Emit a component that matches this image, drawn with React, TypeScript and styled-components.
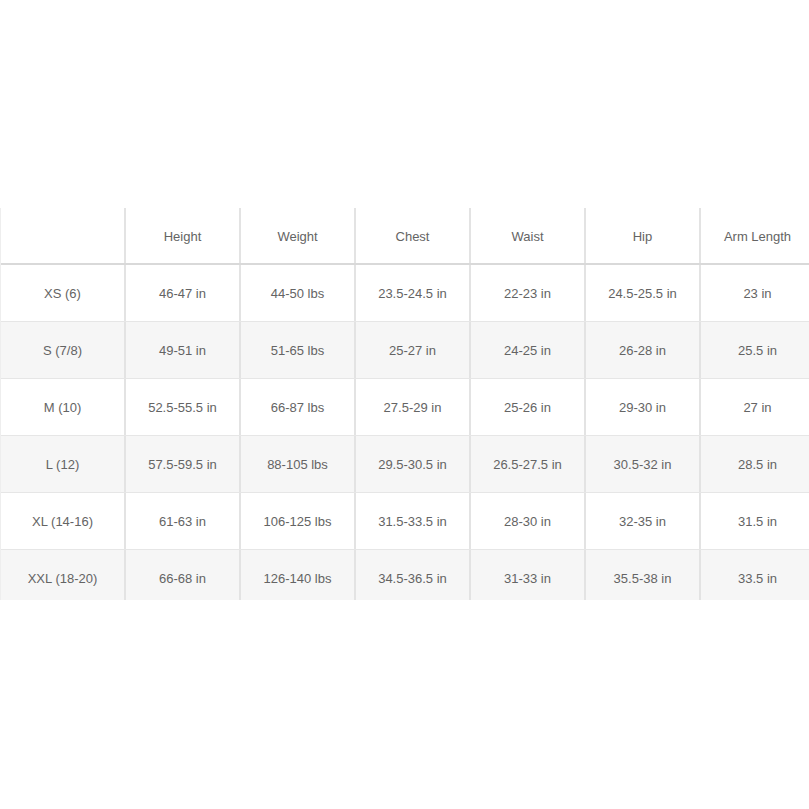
import React from "react";
import styled, { createGlobalStyle } from "styled-components";

const Global = createGlobalStyle`
  html, body { margin: 0; padding: 0; background: #ffffff; }
  body { font-family: "Liberation Sans", Arial, sans-serif; }
`;

const Page = styled.div`
  width: 809px;
  height: 809px;
  padding-top: 208px;
  box-sizing: border-box;
  overflow: hidden;
`;

const Clip = styled.div`
  height: 392px;
  overflow: hidden;
  width: 809px;
`;

const Table = styled.div`
  width: 817px;
  border-left: 1px solid #eeeeee;
  box-sizing: border-box;
`;

const Row = styled.div<{ $header?: boolean; $shaded?: boolean }>`
  display: grid;
  grid-template-columns: 125px repeat(6, 115px);
  height: 57px;
  box-sizing: border-box;
  background: ${(p) => (p.$shaded ? "#f6f6f6" : "#ffffff")};
  border-bottom: ${(p) => (p.$header ? "2px solid #d9d9d9" : "1px solid #e6e6e6")};
`;

const Cell = styled.div<{ $header?: boolean }>`
  display: flex;
  align-items: center;
  justify-content: center;
  padding-top: ${(p) => (p.$header ? "2px" : "0")};
  font-size: 13px;
  color: #646464;
  border-right: 2px solid #e3e3e3;
  box-sizing: border-box;
  white-space: nowrap;
`;

const headers = ["", "Height", "Weight", "Chest", "Waist", "Hip", "Arm Length"];

const rows: string[][] = [
  ["XS (6)", "46-47 in", "44-50 lbs", "23.5-24.5 in", "22-23 in", "24.5-25.5 in", "23 in"],
  ["S (7/8)", "49-51 in", "51-65 lbs", "25-27 in", "24-25 in", "26-28 in", "25.5 in"],
  ["M (10)", "52.5-55.5 in", "66-87 lbs", "27.5-29 in", "25-26 in", "29-30 in", "27 in"],
  ["L (12)", "57.5-59.5 in", "88-105 lbs", "29.5-30.5 in", "26.5-27.5 in", "30.5-32 in", "28.5 in"],
  ["XL (14-16)", "61-63 in", "106-125 lbs", "31.5-33.5 in", "28-30 in", "32-35 in", "31.5 in"],
  ["XXL (18-20)", "66-68 in", "126-140 lbs", "34.5-36.5 in", "31-33 in", "35.5-38 in", "33.5 in"],
];

export default function App() {
  return (
    <>
      <Global />
      <Page>
        <Clip>
          <Table>
            <Row $header>
              {headers.map((h, i) => (
                <Cell key={i} $header>
                  {h}
                </Cell>
              ))}
            </Row>
            {rows.map((r, i) => (
              <Row key={i} $shaded={i % 2 === 1}>
                {r.map((c, j) => (
                  <Cell key={j}>{c}</Cell>
                ))}
              </Row>
            ))}
          </Table>
        </Clip>
      </Page>
    </>
  );
}
